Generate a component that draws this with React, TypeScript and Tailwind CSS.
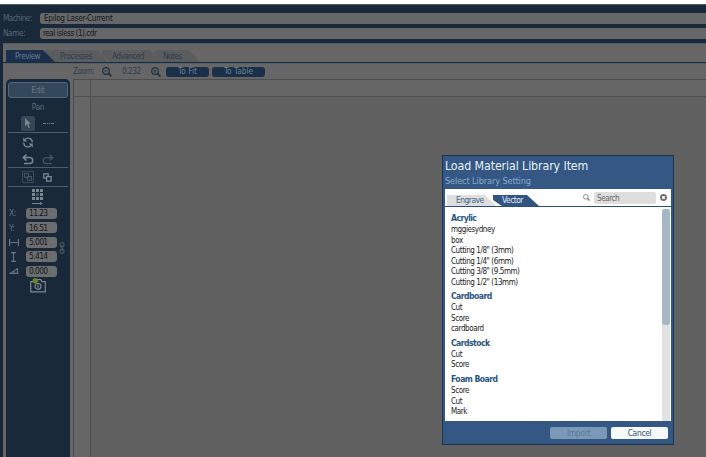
import type { ReactNode } from "react";

const groups = [
  { name: "Acrylic", items: ["mggiesydney", "box", 'Cutting 1/8" (3mm)', 'Cutting 1/4" (6mm)', 'Cutting 3/8" (9.5mm)', 'Cutting 1/2" (13mm)'] },
  { name: "Cardboard", items: ["Cut", "Score", "cardboard"] },
  { name: "Cardstock", items: ["Cut", "Score"] },
  { name: "Foam Board", items: ["Score", "Cut", "Mark"] },
];

function Magnifier({ sign, className }: { sign?: "minus" | "plus"; className: string }) {
  return (
    <svg viewBox="0 0 12 12" className={className} fill="none" stroke="currentColor" strokeWidth="1.4">
      <circle cx="4.8" cy="4.8" r="4" />
      <path d="M7.8 7.8 L11.2 11.2" strokeWidth="2.2" />
      {sign && <path d={sign === "plus" ? "M2.8 4.8h4M4.8 2.8v4" : "M2.8 4.8h4"} strokeWidth="1.1" />}
    </svg>
  );
}

function Tab({ label, active, className }: { label: string; active?: boolean; className: string }) {
  return (
    <div
      className={`flex h-[12px] shrink-0 items-center text-[8.2px] ${active ? "bg-[#1a304c] text-[#657a8c] [clip-path:polygon(0_0,calc(100%-12px)_0,100%_100%,0_100%)]" : "bg-[#5b5c5e] text-[#2b3d50] [clip-path:polygon(0_0,calc(100%-11px)_0,100%_100%,8px_100%,0_4px)]"} ${className}`}
    >
      {label}
    </div>
  );
}

function Row({ icon, value }: { icon: ReactNode; value: string }) {
  return (
    <div className="flex h-[14.4px] items-center">
      <div className="flex w-[18px] items-center pl-[1px] text-[8.5px] text-[#627482]">{icon}</div>
      <div className="flex h-[11px] w-[31px] items-center rounded-[3px] bg-[#6c6d6e] pl-[3px] text-[8.4px] tracking-[-0.6px] text-[#15181b]">{value}</div>
    </div>
  );
}

function Sidebar() {
  return (
    <div className="flex w-[64px] flex-col rounded-t-[5px] bg-[#192939] px-[2px] pt-[3px] text-[#7a8790]">
      <div className="flex h-[16px] items-center justify-center rounded-[3px] border border-[#50677c] bg-[#34485b] text-[8.4px] tracking-[-0.3px] text-[#637789]">Edit</div>
      <div className="mt-[3px] flex h-[12px] items-center justify-center text-[8.4px] tracking-[-0.3px] text-[#5a6e7e]">Pan</div>
      <div className="mt-[1px] flex h-[18px] items-center pl-[13px]">
        <div className="flex h-[15px] w-[14px] items-center justify-center rounded-[2px] bg-[#354654]">
          <svg viewBox="0 0 8 11" className="h-[11px] w-[8px]" fill="#7b858b"><path d="M1 0 L1 8 L3 6.4 L4.7 10.3 L6 9.7 L4.5 6 L7 6 Z" /></svg>
        </div>
        <svg viewBox="0 0 11 3" className="ml-[8px] h-[3px] w-[11px]" fill="#6f7c85"><path d="M0 1h3v1H0zM4 1h1.4v1H4zM6.2 1h1v1h-1zM8 1h3v1H8z" /></svg>
      </div>
      <div className="border-t border-[#4a5d6c]" />
      <div className="flex h-[18px] items-center pl-[14px]">
        <svg viewBox="0 0 12 12" className="h-[11px] w-[12px]" fill="none" stroke="currentColor" strokeWidth="1.5">
          <path d="M10.7 5.8 A4.7 4.7 0 0 0 2.6 2.7 M1.3 6.2 A4.7 4.7 0 0 0 9.4 9.3" />
          <path d="M0.8 0.6 V5 H5.2 Z M11.2 11.4 V7 H6.8 Z" fill="currentColor" stroke="none" />
        </svg>
      </div>
      <div className="flex h-[16px] items-center gap-[8px] pl-[14px]">
        <svg viewBox="0 0 12 11" className="h-[11px] w-[12px]" fill="none" stroke="currentColor" strokeWidth="1.5"><path d="M4.5 0.6 L1.3 3.6 L4.5 6.6 M1.5 3.6 H7.7 A3 3 0 0 1 7.7 9.6 H2" /></svg>
        <svg viewBox="0 0 12 11" className="h-[11px] w-[12px] text-[#445463]" fill="none" stroke="currentColor" strokeWidth="1.4"><path d="M7.5 0.6 L10.7 3.6 L7.5 6.6 M10.5 3.6 H4.3 A3 3 0 0 0 4.3 9.6 H10" /></svg>
      </div>
      <div className="border-t border-[#4a5d6c]" />
      <div className="flex h-[18px] items-center pl-[14px]">
        <svg viewBox="0 0 13 13" className="h-[13px] w-[13px] text-[#43545f]" fill="none" stroke="currentColor"><path d="M.5.5h11v11H.5z" strokeWidth=".8" /><path d="M2.5 2.5h4v4h-4zM5.5 5.5h4v4h-4z" strokeWidth="1.2" /></svg>
        <svg viewBox="0 0 9 9" className="ml-[8px] h-[9px] w-[9px]" fill="none" stroke="currentColor" strokeWidth="1.3"><path d="M.8.8h4.4v4.4H.8z" /><path d="M3.6 3.6h4.5v4.5H3.6z" fill="#192939" /></svg>
      </div>
      <div className="border-t border-[#4a5d6c]" />
      <div className="flex h-[19.4px] justify-center pt-[2px]">
        <svg viewBox="0 0 12 17" className="h-[17px] w-[12px]" fill="currentColor">
          <path d="M0 0h3v3H0zM4 0h3v3H4zM8 0h3v3H8zM0 4h3v3H0zM8 4h3v3H8zM0 8h3v3H0zM4 8h3v3H4zM8 8h3v3H8z" />
          <path d="M4 4h3v3H4z" opacity=".45" />
          <path d="M0 14h8v-1l3 1.5-3 1.5v-1H0z" />
        </svg>
      </div>
      <div className="flex items-center">
        <div className="w-[49px]">
          <Row icon={<span className="tracking-[-0.4px]">X:</span>} value="11.23" />
          <Row icon={<span className="tracking-[-0.4px]">Y:</span>} value="16.51" />
          <Row icon={<svg viewBox="0 0 10 7" className="h-[7px] w-[10px]" fill="none" stroke="currentColor" strokeWidth="1.2"><path d="M.6 0v7M9.4 0v7M1 3.5h8" /></svg>} value="5.001" />
          <Row icon={<svg viewBox="0 0 7 10" className="ml-[1px] h-[10px] w-[7px]" fill="none" stroke="currentColor" strokeWidth="1.2"><path d="M1 .6h5M1 9.4h5M3.5 1v8" /></svg>} value="5.414" />
          <Row icon={<svg viewBox="0 0 10 6" className="h-[6px] w-[10px]" fill="none" stroke="currentColor" strokeWidth="1.1"><path d="M9.5 5.4H1L8.5 .6V5.2M5 3v2" /></svg>} value="0.000" />
        </div>
        <svg viewBox="0 0 6 12" className="ml-[2px] mt-[12px] h-[12px] w-[6px] text-[#52636f]" fill="none" stroke="currentColor"><rect x="1" y=".5" width="4" height="4.5" rx="2" /><rect x="1" y="7" width="4" height="4.5" rx="2" /><path d="M3 3.2v5.6" /></svg>
      </div>
      <div className="flex justify-center">
        <svg viewBox="0 0 16 15" className="h-[15px] w-[16px]" fill="none" stroke="currentColor" strokeWidth="1.2">
          <path d="M.7 3.6H4L5.3 1.6H10.7L12 3.6H15.3V13.8H.7Z" />
          <circle cx="8" cy="8.3" r="3" /><path d="M8 6.8v3" />
          <circle cx="5.2" cy="2.7" r="2.7" fill="#638330" stroke="none" />
        </svg>
      </div>
    </div>
  );
}

function Dialog() {
  return (
    <div className="absolute left-[442px] top-[155px] flex h-[290px] w-[232px] flex-col border border-[#1c3451] bg-[#345784] px-[2px]">
      <div className="h-[33px]">
        <div className="flex h-[20px] items-center whitespace-nowrap text-[12.3px] tracking-[-0.1px] text-[#e9f1f5]">Load Material Library Item</div>
        <div className="flex h-[10px] items-center whitespace-nowrap text-[9.2px] tracking-[-0.15px] text-[#86abce]">Select Library Setting</div>
      </div>
      <div className="flex h-[232px] flex-col bg-white">
        <div className="flex h-[18px] shrink-0 border-b border-[#294f79] tracking-[-0.5px]">
          <div className="ml-[2px] mt-[6px] flex h-[11px] w-[49px] items-center bg-[#dedede] pl-[9px] text-[8.4px] text-[#3d6489] [clip-path:polygon(0_0,38px_0,100%_100%,0_100%)]">Engrave</div>
          <div className="-ml-[3px] mt-[6px] flex h-[11px] w-[46px] items-center bg-[#315580] pl-[9px] text-[8.4px] text-[#e5eff5] [clip-path:polygon(0_0,34px_0,100%_100%,9px_100%,0_5px)]">Vector</div>
          <Magnifier className="ml-[44px] mt-[5px] h-[7px] w-[7px] text-[#777]" />
          <div className="ml-[4px] mt-[3px] flex h-[12px] w-[62px] items-center rounded-[2px] bg-[#dedede] pl-[3px] text-[8.2px] text-[#666]">Search</div>
          <svg viewBox="0 0 8 8" className="ml-[4px] mt-[5px] h-[7px] w-[7px]"><circle cx="4" cy="4" r="3.9" fill="#6a6a6a" /><path d="M2.6 2.6l2.8 2.8M5.4 2.6L2.6 5.4" stroke="#fff" strokeWidth="1.7" /></svg>
        </div>
        <div className="flex min-h-0 flex-1 pt-[2px]">
          <div className="flex-1 pl-[6px]">
            {groups.map((g) => (
              <div key={g.name}>
                <div className="h-[15.4px] whitespace-nowrap pt-[4px] text-[8.6px] font-bold leading-[10.4px] tracking-[-0.56px] text-[#28557f]">{g.name}</div>
                {g.items.map((item) => (
                  <div key={item} className="h-[10.43px] whitespace-nowrap pt-[1px] text-[8px] leading-[10.4px] tracking-[-0.42px] text-[#222]">{item}</div>
                ))}
              </div>
            ))}
          </div>
          <div className="mr-[1px] w-[8px] bg-[#e1e1e1]"><div className="h-[116px] rounded-[3px] bg-[#a5b7c7]" /></div>
        </div>
      </div>
      <div className="flex gap-[4px] pl-[105px] pt-[6px] text-[8.4px] tracking-[-0.3px]">
        <div className="flex h-[12px] w-[57px] items-center justify-center rounded-[2px] bg-[#7b99b6] text-[#5479a0]">Import</div>
        <div className="flex h-[12px] w-[57px] items-center justify-center rounded-[2px] bg-[#f6f9fa] text-[#2e5379]">Cancel</div>
      </div>
    </div>
  );
}

export default function App() {
  return (
    <div className="relative flex h-[457px] w-[706px] flex-col overflow-hidden bg-white pt-[4px] font-['DejaVu_Sans_Condensed','DejaVu_Sans',sans-serif] [font-stretch:condensed]">
      <div className="h-[39px] shrink-0 border-t border-[#505b64] bg-[#1a2939] pt-[8px] text-[8.2px]">
        <div className="flex h-[11px] items-center">
          <div className="w-[40px] pl-[3px] tracking-[-0.6px] text-[#52687c]">Machine:</div>
          <div className="flex h-[11px] flex-1 items-center rounded-l-[3px] bg-[#676767] pl-[4px] text-[8.1px] tracking-[-0.27px] text-[#12171c]">Epilog Laser-Current</div>
        </div>
        <div className="mt-[4px] flex h-[11px] items-center">
          <div className="w-[40px] pl-[3px] tracking-[-0.4px] text-[#52687c]">Name:</div>
          <div className="flex h-[11px] flex-1 items-center rounded-l-[3px] bg-[#676767] pl-[3px] text-[8px] tracking-[-0.44px] text-[#12171c]">real isless (1).cdr</div>
        </div>
      </div>
      <div className="flex min-h-0 flex-1 bg-[#1a2939] pl-[3px]">
        <div className="flex min-w-0 flex-1 flex-col border-t border-[#4e5b67] bg-[#666]">
          <div className="flex h-[19px] shrink-0 items-end border-b border-[#1b2c3d] pl-[3px]">
            <Tab label="Preview" active className="z-10 w-[49px] pl-[9px] tracking-[-0.5px]" />
            <Tab label="Processes" className="-ml-[10px] w-[63px] pl-[15px] tracking-[-0.45px]" />
            <Tab label="Advanced" className="-ml-[6px] w-[59px] pl-[10px] tracking-[-0.55px]" />
            <Tab label="Notes" className="-ml-[7px] w-[46px] pl-[9px] tracking-[-0.5px]" />
          </div>
          <div className="flex h-[16px] shrink-0 items-center border-t border-[#53606a] pl-[70px] text-[8.3px] text-[#2b3e50]">
            <span className="w-[29px] tracking-[-0.6px]">Zoom:</span>
            <Magnifier sign="minus" className="h-[10px] w-[10px] text-[#1e3247]" />
            <span className="ml-[10px] w-[29px] tracking-[-0.5px]">0.232</span>
            <Magnifier sign="plus" className="h-[10px] w-[10px] text-[#1e3247]" />
            <div className="ml-[5px] flex h-[10px] w-[43px] items-center justify-center rounded-[3px] bg-[#1a2f49] text-[#70818e]">To Fit</div>
            <div className="ml-[3px] flex h-[10px] w-[53px] items-center justify-center rounded-[3px] bg-[#1a2f49] text-[#70818e]">To Table</div>
          </div>
          <div className="flex min-h-0 flex-1 pl-[3px]">
            <Sidebar />
            <div className="ml-[3px] flex flex-1 flex-col border-l border-t border-[#4d4d4d] bg-[#666]">
              <div className="flex h-[17px] border-b border-[#4f4f4f]"><div className="w-[17px] border-r border-[#4f4f4f]" /></div>
              <div className="flex flex-1"><div className="w-[17px] border-r border-[#4f4f4f]" /><div className="flex-1 bg-[#616161]" /></div>
            </div>
          </div>
        </div>
      </div>
      <Dialog />
    </div>
  );
}
